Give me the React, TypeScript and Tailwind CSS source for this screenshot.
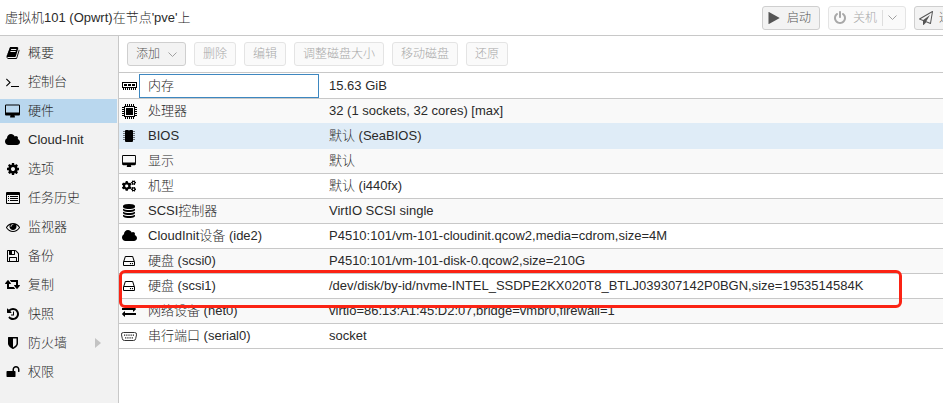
import type { ReactNode } from "react";
import { FaCogs } from "react-icons/fa";

type GlyphProps = { d: string; box?: string; className?: string };

function Glyph({ d, box = "0 0 1792 1792", className = "h-[14px] w-[15px]" }: GlyphProps) {
  return (
    <svg viewBox={box} className={className} fill="currentColor" aria-hidden="true">
      <path d={d} />
    </svg>
  );
}

const paths = {
  book: "M1703 478q40 57 18 129l-275 906q-19 64-76.5 107.5t-122.5 43.5h-923q-77 0-148.5-53.5t-99.5-131.5q-24-67-2-127 0-4 3-27t4-37q1-8-3-21.5t-3-19.5q2-11 8-21t16.5-23.5 16.5-23.5q23-38 45-91.5t30-91.5q3-10 .5-30t-.5-28q3-11 17-28t17-23q21-36 42-92t25-90q1-9-2.5-32t.5-28q4-13 22-30.5t22-22.5q19-26 42.5-84.5t27.5-96.5q1-8-3-25.5t-2-26.5q2-8 9-18t18-23 17-21q8-12 16.5-30.5t15-35 16-36 19.5-32 26.5-23.5 36-11.5 47.5 5.5l-1 3q38-9 51-9h761q74 0 114 56t18 130l-274 906q-36 119-71.5 153.5t-128.5 34.5h-869q-27 0-38 15-11 16-1 43 24 70 144 70h923q29 0 56-15.5t35-41.5l300-987q7-22 5-57 38 15 59 43zm-1064 2q-4 13 2 22.5t20 9.5h608q13 0 25.5-9.5t16.5-22.5l21-64q4-13-2-22.5t-20-9.5h-608q-13 0-25.5 9.5t-16.5 22.5zm-83 256q-4 13 2 22.5t20 9.5h608q13 0 25.5-9.5t16.5-22.5l21-64q4-13-2-22.5t-20-9.5h-608q-13 0-25.5 9.5t-16.5 22.5z",
  terminal:
    "M649 983l-466 466q-10 10-23 10t-23-10l-50-50q-10-10-10-23t10-23l393-393-393-393q-10-10-10-23t10-23l50-50q10-10 23-10t23 10l466 466q10 10 10 23t-10 23zm1079 457v64q0 14-9 23t-23 9h-960q-14 0-23-9t-9-23v-64q0-14 9-23t23-9h960q14 0 23 9t9 23z",
  desktop:
    "M1792 992v-832q0-13-9.5-22.5t-22.5-9.5h-1600q-13 0-22.5 9.5t-9.5 22.5v832q0 13 9.5 22.5t22.5 9.5h1600q13 0 22.5-9.5t9.5-22.5zm128-832v1088q0 66-47 113t-113 47h-544q0 37 16 77.5t32 71 16 43.5q0 26-19 45t-45 19h-512q-26 0-45-19t-19-45q0-14 16-44t32-70 16-78h-544q-66 0-113-47t-47-113v-1088q0-66 47-113t113-47h1600q66 0 113 47t47 113z",
  cloud:
    "M1984 1152q0 159-112.5 271.5t-271.5 112.5h-1088q-185 0-316.5-131.5t-131.5-316.5q0-132 71-241.5t187-163.5q-2-28-2-43 0-212 150-362t362-150q158 0 286.5 88t187.5 230q70-62 166-62 106 0 181 75t75 181q0 75-41 138 129 30 213 134.5t84 239.5z",
  cog: "M1152 896q0-106-75-181t-181-75-181 75-75 181 75 181 181 75 181-75 75-181zm512-109v222q0 12-8 23t-20 13l-185 28q-19 54-39 91 35 50 107 138 10 12 10 25t-9 23q-27 37-99 108t-94 71q-12 0-26-9l-138-108q-44 23-91 38-16 136-29 186-7 28-36 28h-222q-14 0-24.5-8.5t-11.5-21.5l-28-184q-49-16-90-37l-141 107q-10 9-25 9-14 0-25-11-126-114-165-168-7-10-7-23 0-12 8-23 15-21 51-66.5t54-70.5q-27-50-41-99l-183-27q-13-2-21-12.5t-8-23.5v-222q0-12 8-23t19-13l186-28q14-46 39-92-40-57-107-138-10-12-10-24 0-10 9-23 26-36 98.5-107.5t94.5-71.5q13 0 26 10l138 107q44-23 91-38 16-136 29-186 7-28 36-28h222q14 0 24.5 8.5t11.5 21.5l28 184q49 16 90 37l142-107q9-9 24-9 13 0 25 10 129 119 165 170 7 8 7 22 0 12-8 23-15 21-51 66.5t-54 70.5q26 50 41 98l183 28q13 2 21 12.5t8 23.5z",
  eye: "M1664 960q-152-236-381-353 61 104 61 225 0 185-131.5 316.5t-316.5 131.5-316.5-131.5-131.5-316.5q0-121 61-225-229 117-381 353 133 205 333.5 326.5t434.5 121.5 434.5-121.5 333.5-326.5zm-720-384q0-20-14-34t-34-14q-125 0-214.5 89.5t-89.5 214.5q0 20 14 34t34 14 34-14 14-34q0-86 61-147t147-61q20 0 34-14t14-34zm848 384q0 34-20 69-140 230-376.5 368.5t-499.5 138.5-499.5-139-376.5-368q-20-35-20-69t20-69q140-229 376.5-368t499.5-139 499.5 139 376.5 368q20 35 20 69z",
  floppy:
    "M512 1536h768v-384h-768v384zm896 0h128v-896q0-14-10-38.5t-20-34.5l-281-281q-10-10-34-20t-39-10v416q0 40-28 68t-68 28h-576q-40 0-68-28t-28-68v-416h-128v1280h128v-416q0-40 28-68t68-28h832q40 0 68 28t28 68v416zm-384-928v-320q0-13-9.5-22.5t-22.5-9.5h-192q-13 0-22.5 9.5t-9.5 22.5v320q0 13 9.5 22.5t22.5 9.5h192q13 0 22.5-9.5t9.5-22.5zm640 32v928q0 40-28 68t-68 28h-1344q-40 0-68-28t-28-68v-1344q0-40 28-68t68-28h928q40 0 88 20t76 48l280 280q28 28 48 76t20 88z",
  retweet:
    "M1280 1504q0 13-9.5 22.5t-22.5 9.5h-960q-8 0-13.5-2t-9-7-5.5-8-3-11.5-1-11.5v-600h-192q-26 0-45-19t-19-45q0-24 15-41l320-384q19-22 49-22t49 22l320 384q15 17 15 41 0 26-19 45t-45 19h-192v384h576q16 0 25 11l160 192q7 10 7 21zm640-416q0 24-15 41l-320 384q-20 23-49 23t-49-23l-320-384q-15-17-15-41 0-26 19-45t45-19h192v-384h-576q-16 0-25-12l-160-192q-7-9-7-20 0-13 9.5-22.5t22.5-9.5h960q8 0 13.5 2t9 7 5.5 8 3 11.5 1 11.5v600h192q26 0 45 19t19 45z",
  history:
    "M1664 896q0 156-61 298t-164 245-245 164-298 61q-172 0-327-72.5t-264-204.5q-7-10-6.5-22.5t8.5-20.5l137-138q10-9 25-9 16 2 23 12 73 95 179 147t225 52q104 0 198.5-40.5t163.5-109.5 109.5-163.5 40.5-198.5-40.5-198.5-109.5-163.5-163.5-109.5-198.5-40.5q-98 0-188 35.5t-160 101.5l137 138q31 30 14 69-17 40-59 40h-448q-26 0-45-19t-19-45v-448q0-42 40-59 39-17 69 14l130 129q107-101 244.5-156.5t284.5-55.5q156 0 298 61t245 164 164 245 61 298zm-640-288v448q0 14-9 23t-23 9h-320q-14 0-23-9t-9-23v-64q0-14 9-23t23-9h224v-352q0-14 9-23t23-9h64q14 0 23 9t9 23z",
  shield:
    "M1344 960v-640h-448v1137q119-63 213-137 235-184 235-360zm192-768v768q0 86-33.5 170.5t-83 150-118 127.5-126.5 103-121 77.5-89.5 49.5-42.5 20q-12 6-26 6t-26-6q-16-7-42.5-20t-89.5-49.5-121-77.5-126.5-103-118-127.5-83-150-33.5-170.5v-768q0-26 19-45t45-19h1152q26 0 45 19t19 45z",
  unlock:
    "M1728 576v256q0 26-19 45t-45 19h-64q-26 0-45-19t-19-45v-256q0-106-75-181t-181-75-181 75-75 181v192h96q40 0 68 28t28 68v576q0 40-28 68t-68 28h-960q-40 0-68-28t-28-68v-576q0-40 28-68t68-28h672v-192q0-185 131.5-316.5t316.5-131.5 316.5 131.5 131.5 316.5z",
  database:
    "M896 768q237 0 443-43t325-127v170q0 69-103 128t-280 93.5-385 34.5-385-34.5-280-93.5-103-128v-170q119 84 325 127t443 43zm0 768q237 0 443-43t325-127v170q0 69-103 128t-280 93.5-385 34.5-385-34.5-280-93.5-103-128v-170q119 84 325 127t443 43zm0-384q237 0 443-43t325-127v170q0 69-103 128t-280 93.5-385 34.5-385-34.5-280-93.5-103-128v-170q119 84 325 127t443 43zm0-1152q208 0 385 34.5t280 93.5 103 128v128q0 69-103 128t-280 93.5-385 34.5-385-34.5-280-93.5-103-128v-128q0-69 103-128t280-93.5 385-34.5z",
  hdd: "M1168 1216q0 33-23.5 56.5t-56.5 23.5-56.5-23.5-23.5-56.5 23.5-56.5 56.5-23.5 56.5 23.5 23.5 56.5zm256 0q0 33-23.5 56.5t-56.5 23.5-56.5-23.5-23.5-56.5 23.5-56.5 56.5-23.5 56.5 23.5 23.5 56.5zm112 160v-320q0-13-9.5-22.5t-22.5-9.5h-1216q-13 0-22.5 9.5t-9.5 22.5v320q0 13 9.5 22.5t22.5 9.5h1216q13 0 22.5-9.5t9.5-22.5zm-1230-480h1180l-157-482q-4-13-16-21.5t-26-8.5h-782q-14 0-26 8.5t-16 21.5zm1358 160v320q0 66-47 113t-113 47h-1216q-66 0-113-47t-47-113v-320q0-25 16-75l197-606q17-53 63-86t101-33h782q55 0 101 33t63 86l197 606q16 50 16 75z",
  exchange:
    "M1792 1184v192q0 13-9.5 22.5t-22.5 9.5h-1376v192q0 13-9.5 22.5t-22.5 9.5q-12 0-24-10l-319-320q-9-9-9-22 0-14 9-23l320-320q9-9 23-9 13 0 22.5 9.5t9.5 22.5v192h1376q13 0 22.5 9.5t9.5 22.5zm0-544q0 14-9 23l-320 320q-9 9-23 9-13 0-22.5-9.5t-9.5-22.5v-192h-1376q-13 0-22.5-9.5t-9.5-22.5v-192q0-13 9.5-22.5t22.5-9.5h1376v-192q0-14 9-23t23-9q12 0 24 10l319 319q9 9 9 23z",
  play: "M1576 927l-1328 738q-23 13-39.5 3t-16.5-36v-1472q0-26 16.5-36t39.5 3l1328 738q23 13 23 31t-23 31z",
  power:
    "M1664 896q0 156-61 298t-164 245-245 164-298 61-298-61-245-164-164-245-61-298q0-182 80.5-343t226.5-270q43-32 95.5-25t83.5 50q32 42 24.5 94.5t-49.5 84.5q-98 74-151.5 181t-53.5 228q0 104 40.5 198.5t109.5 163.5 163.5 109.5 198.5 40.5 198.5-40.5 163.5-109.5 109.5-163.5 40.5-198.5q0-121-53.5-228t-151.5-181q-42-32-49.5-84.5t24.5-94.5q31-43 84-50t95 25q146 109 226.5 270t80.5 343zm-640-768v640q0 52-38 90t-90 38-90-38-38-90v-640q0-52 38-90t90-38 90 38 38 90z",
  plane:
    "M1764 11q33 24 27 64l-256 1536q-5 29-32 45-14 8-31 8-11 0-24-5l-527-215-298 327q-18 21-47 21-14 0-23-4-19-7-30-23.5t-11-36.5v-452l-472-193q-37-14-40-55-3-39 32-59l1664-960q35-21 68 2zm-342 1499l221-1323-1434 827 336 137 863-639-478 797z",
};

const cloud = <Glyph d={paths.cloud} box="64 0 1920 1792" />;
const hdd = <Glyph d={paths.hdd} className="size-[14px]" />;

function ListIcon() {
  return (
    <svg viewBox="0 0 14 12" className="h-3 w-[14px]" fill="currentColor" aria-hidden="true">
      <path
        fillRule="evenodd"
        d="M1 0h12a1 1 0 0 1 1 1v10a1 1 0 0 1-1 1H1a1 1 0 0 1-1-1V1a1 1 0 0 1 1-1zM1 3v8h12V3z"
      />
      <path d="M2 4h1v1H2zM4 4h8v1H4zM2 6h1v1H2zM4 6h8v1H4zM2 8h1v1H2zM4 8h8v1H4z" />
    </svg>
  );
}

function MemoryIcon() {
  return (
    <svg viewBox="0 0 15 8" className="h-2 w-[15px]" fill="currentColor" aria-hidden="true">
      <path fillRule="evenodd" d="M0 0h15v6H0zM1 1v4h13V1z" />
      <path d="M2 2h3v2H2zM6 2h3v2H6zM10 2h3v2h-3zM1 6h1v2H1zM3 6h1v2H3zM5 6h1v2H5zM7 6h1v2H7zM9 6h1v2H9zM11 6h1v2h-1zM13 6h1v2h-1z" />
    </svg>
  );
}

function CpuIcon() {
  return (
    <svg viewBox="0 0 15 15" className="size-[15px]" fill="currentColor" aria-hidden="true">
      <path fillRule="evenodd" d="M2 2h11v11H2zM3 3v9h9V3z" />
      <path d="M4 4h7v7H4z" />
      <path d="M3 0h1v2H3zM5 0h1v2H5zM7 0h1v2H7zM9 0h1v2H9zM11 0h1v2h-1zM3 13h1v2H3zM5 13h1v2H5zM7 13h1v2H7zM9 13h1v2H9zM11 13h1v2h-1zM0 3h2v1H0zM0 5h2v1H0zM0 7h2v1H0zM0 9h2v1H0zM0 11h2v1H0zM13 3h2v1h-2zM13 5h2v1h-2zM13 7h2v1h-2zM13 9h2v1h-2zM13 11h2v1h-2z" />
    </svg>
  );
}

function ChipIcon() {
  return (
    <svg viewBox="0 0 12 12" className="size-3" fill="currentColor" aria-hidden="true">
      <path d="M2 1a1 1 0 0 1 1-1h2q1 .8 2 0h2a1 1 0 0 1 1 1v10a1 1 0 0 1-1 1H3a1 1 0 0 1-1-1z" />
      <path
        opacity=".5"
        d="M0 1h2v1H0zM0 3h2v1H0zM0 5h2v1H0zM0 7h2v1H0zM0 9h2v1H0zM10 1h2v1h-2zM10 3h2v1h-2zM10 5h2v1h-2zM10 7h2v1h-2zM10 9h2v1h-2z"
      />
    </svg>
  );
}

function SerialIcon() {
  return (
    <svg viewBox="0 0 16 9" className="h-[9px] w-4" aria-hidden="true">
      <path
        d="M2.5.5h11a2 2 0 0 1 2 2.4l-.8 3.6a2.2 2.2 0 0 1-2.2 2h-9a2.2 2.2 0 0 1-2.2-2L.5 2.9a2 2 0 0 1 2-2.4z"
        fill="none"
        stroke="#333"
      />
      <path
        d="M3 2.5h1.2v1.3H3zM5.2 2.5h1.2v1.3H5.2zM7.4 2.5h1.2v1.3H7.4zM9.6 2.5h1.2v1.3H9.6zM11.8 2.5H13v1.3h-1.2zM4.1 5.2h1.2v1.3H4.1zM6.3 5.2h1.2v1.3H6.3zM8.5 5.2h1.2v1.3H8.5zM10.7 5.2h1.2v1.3h-1.2z"
        fill="#222"
      />
    </svg>
  );
}

function Chevron() {
  return (
    <svg viewBox="0 0 9 5" className="h-[5px] w-[9px]" fill="none" stroke="#a0a0a0" aria-hidden="true">
      <path d="M.5.5l4 4 4-4" />
    </svg>
  );
}

const navItems: { label: string; icon: ReactNode; selected?: boolean; expandable?: boolean }[] = [
  { label: "概要", icon: <Glyph d={paths.book} className="size-[14px]" /> },
  { label: "控制台", icon: <Glyph d={paths.terminal} /> },
  { label: "硬件", icon: <Glyph d={paths.desktop} box="0 0 1920 1664" />, selected: true },
  { label: "Cloud-Init", icon: cloud },
  { label: "选项", icon: <Glyph d={paths.cog} className="size-[14px]" /> },
  { label: "任务历史", icon: <ListIcon /> },
  { label: "监视器", icon: <Glyph d={paths.eye} className="size-[14px]" /> },
  { label: "备份", icon: <Glyph d={paths.floppy} className="size-[14px]" /> },
  { label: "复制", icon: <Glyph d={paths.retweet} box="0 128 1920 1792" /> },
  { label: "快照", icon: <Glyph d={paths.history} className="size-[14px]" /> },
  { label: "防火墙", icon: <Glyph d={paths.shield} className="size-[14px]" />, expandable: true },
  { label: "权限", icon: <Glyph d={paths.unlock} className="size-[14px]" /> },
];

type Row = { name: string; value: string; icon: ReactNode; state?: "focused" | "selected" | "marked" };

const rows: Row[] = [
  { name: "内存", value: "15.63 GiB", icon: <MemoryIcon />, state: "focused" },
  { name: "处理器", value: "32 (1 sockets, 32 cores) [max]", icon: <CpuIcon /> },
  { name: "BIOS", value: "默认 (SeaBIOS)", icon: <ChipIcon />, state: "selected" },
  {
    name: "显示",
    value: "默认",
    icon: <Glyph d={paths.desktop} box="0 0 1920 1664" className="h-3 w-[14px]" />,
  },
  { name: "机型", value: "默认 (i440fx)", icon: <FaCogs className="size-[14px]" /> },
  { name: "SCSI控制器", value: "VirtIO SCSI single", icon: <Glyph d={paths.database} className="size-[14px]" /> },
  { name: "CloudInit设备 (ide2)", value: "P4510:101/vm-101-cloudinit.qcow2,media=cdrom,size=4M", icon: cloud },
  { name: "硬盘 (scsi0)", value: "P4510:101/vm-101-disk-0.qcow2,size=210G", icon: hdd },
  {
    name: "硬盘 (scsi1)",
    value: "/dev/disk/by-id/nvme-INTEL_SSDPE2KX020T8_BTLJ039307142P0BGN,size=1953514584K",
    icon: hdd,
    state: "marked",
  },
  {
    name: "网络设备 (net0)",
    value: "virtio=86:13:A1:45:D2:07,bridge=vmbr0,firewall=1",
    icon: <Glyph d={paths.exchange} className="size-[14px]" />,
  },
  { name: "串行端口 (serial0)", value: "socket", icon: <SerialIcon /> },
];

type ToolButtonProps = { children: ReactNode; icon?: string; disabled?: boolean };

function ToolButton({ children, icon, disabled = false }: ToolButtonProps) {
  return (
    <button
      type="button"
      disabled={disabled}
      className={`flex h-6 shrink-0 items-center rounded-[3px] border border-[#cfcfcf] bg-[#f3f3f3] pr-2 text-xs whitespace-nowrap text-[#555] disabled:border-[#e4e4e4] disabled:bg-[#fafafa] disabled:text-[#a8a8a8] ${
        icon ? "pl-1" : "pl-2"
      }`}
    >
      {icon && <Glyph d={icon} className="mr-[6px] size-[14px]" />}
      {children}
    </button>
  );
}

function HardwareRow({ row, index }: { row: Row; index: number }) {
  const selected = row.state === "selected";
  const beforeSelected = rows[index + 1]?.state === "selected";
  const background = selected ? "bg-[#dfecf7]" : index % 2 === 1 ? "bg-[#f9f9f9]" : "bg-white";
  const border = selected || beforeSelected ? "border-[#dfecf7]" : "border-[#c8c8c8]";
  return (
    <tr className={`h-[25px] ${background}`}>
      <td className={`relative border-b p-0 ${border}`}>
        <span className="flex items-center justify-center">{row.icon}</span>
        {row.state === "marked" && (
          <span className="pointer-events-none absolute -top-1 left-0 z-10 h-[38px] w-[783px] rounded-md border-3 border-[#fb2314]" />
        )}
      </td>
      <th scope="row" className={`border-b p-0 text-left font-light ${border}`}>
        <span
          className={`flex h-6 items-center border pl-2 ${
            row.state === "focused" ? "border-[#3d87c0]" : "border-transparent"
          }`}
        >
          {row.name}
        </span>
      </th>
      <td className={`border-b py-0 pr-0 pl-[10px] whitespace-nowrap ${border}`}>{row.value}</td>
    </tr>
  );
}

export default function App() {
  return (
    <div className="flex min-h-screen flex-col overflow-hidden bg-white font-['Liberation_Sans','Noto_Sans_CJK_SC',sans-serif] text-[13px] leading-4 font-light text-[#2a2a2a]">
      <header className="flex h-9 items-center overflow-hidden border-b border-[#c8c8c8] pl-[5px]">
        <h1 className="min-w-0 flex-1 truncate">虚拟机101 (Opwrt)在节点&apos;pve&apos;上</h1>
        <div className="flex w-[181px] shrink-0 gap-2">
          <ToolButton icon={paths.play}>启动</ToolButton>
          <ToolButton icon={paths.power} disabled>
            关机
            <span className="mx-[5px] h-4 w-px bg-[#dedede]" />
            <Chevron />
          </ToolButton>
          <ToolButton icon={paths.plane}>迁移</ToolButton>
        </div>
      </header>

      <div className="flex flex-1">
        <nav className="flex w-[119px] shrink-0 flex-col gap-[5px] border-r border-[#c8c8c8] bg-[#f2f2f2] pt-[5px] pr-px">
          {navItems.map((item) => (
            <a
              key={item.label}
              href="#"
              aria-current={item.selected ? "page" : undefined}
              className={`flex h-6 items-center gap-2 pl-[5px] ${item.selected ? "bg-[#b9d7ee]" : ""}`}
            >
              <span className="flex w-[15px] justify-center text-black">{item.icon}</span>
              {item.label}
              {item.expandable && (
                <svg viewBox="0 0 6 10" className="mr-4 ml-auto h-[10px] w-[6px]" fill="#c3c3c3" aria-hidden="true">
                  <path d="M0 0l6 5-6 5z" />
                </svg>
              )}
            </a>
          ))}
        </nav>

        <main className="min-w-0 flex-1">
          <div className="flex h-[37px] items-center gap-2 border-b border-[#c8c8c8] pl-2">
            <ToolButton>
              添加
              <span className="ml-2">
                <Chevron />
              </span>
            </ToolButton>
            <ToolButton disabled>删除</ToolButton>
            <ToolButton disabled>编辑</ToolButton>
            <ToolButton disabled>调整磁盘大小</ToolButton>
            <ToolButton disabled>移动磁盘</ToolButton>
            <ToolButton disabled>还原</ToolButton>
          </div>
          <table className="mt-px w-full table-fixed border-separate border-spacing-0">
            <colgroup>
              <col className="w-5" />
              <col className="w-[180px]" />
              <col />
            </colgroup>
            <tbody className="[&_svg]:text-black">
              {rows.map((row, index) => (
                <HardwareRow key={row.name} row={row} index={index} />
              ))}
            </tbody>
          </table>
        </main>
      </div>
    </div>
  );
}
